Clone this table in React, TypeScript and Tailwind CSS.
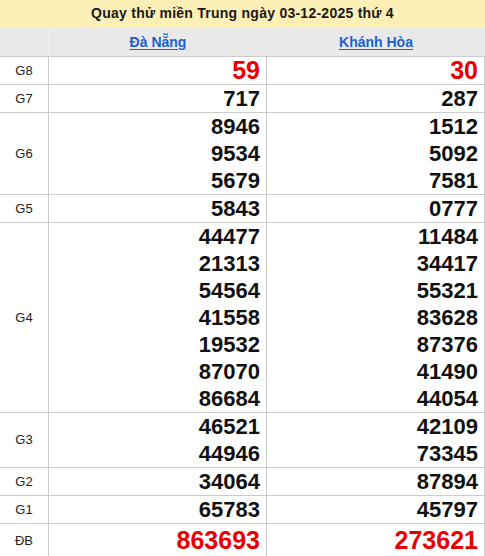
const provinces = ["Đà Nẵng", "Khánh Hòa"];

type Prize = { label: string; a: string[]; b: string[]; red?: boolean };

const prizes: Prize[] = [
  { label: "G8", a: ["59"], b: ["30"], red: true },
  { label: "G7", a: ["717"], b: ["287"] },
  { label: "G6", a: ["8946", "9534", "5679"], b: ["1512", "5092", "7581"] },
  { label: "G5", a: ["5843"], b: ["0777"] },
  {
    label: "G4",
    a: ["44477", "21313", "54564", "41558", "19532", "87070", "86684"],
    b: ["11484", "34417", "55321", "83628", "87376", "41490", "44054"],
  },
  { label: "G3", a: ["46521", "44946"], b: ["42109", "73345"] },
  { label: "G2", a: ["34064"], b: ["87894"] },
  { label: "G1", a: ["65783"], b: ["45797"] },
  { label: "ĐB", a: ["863693"], b: ["273621"], red: true },
];

function NumberCell({ nums, red, last }: { nums: string[]; red?: boolean; last?: boolean }) {
  return (
    <div className="flex flex-col items-end border-r border-[#cccccc] pr-[6px]">
      {nums.map((n) => (
        <span
          key={n}
          className={
            red
              ? `text-[25px] font-bold text-[#e60000] ${last ? "leading-[33px]" : "leading-[27px]"}`
              : "text-[22px] font-bold leading-[27px] text-[#111111]"
          }
        >
          {n}
        </span>
      ))}
    </div>
  );
}

export default function App() {
  return (
    <div className="w-[485px] bg-white font-['Liberation_Sans',Arial,sans-serif]">
      <div className="flex h-7 items-center justify-center bg-[#fcefb5] pb-[2px] text-[14px] font-bold tracking-[0.25px] text-[#1a1a1a]">
        Quay thử miền Trung ngày 03-12-2025 thứ 4
      </div>

      <div className="grid h-[29px] grid-cols-[49px_218px_218px] border-b border-[#cccccc] bg-[#e9e9e9]">
        <div className="border-r border-[#f3f3f3]" />
        {provinces.map((p) => (
          <div key={p} className="flex items-center justify-center">
            <a href="#" className="text-[14px] font-bold text-[#1c5fd4] underline underline-offset-2">
              {p}
            </a>
          </div>
        ))}
      </div>

      {prizes.map((p, i) => (
        <div
          key={p.label}
          className="grid grid-cols-[49px_218px_218px] border-b border-[#cccccc]"
        >
          <div className="flex items-center justify-center border-r border-[#cccccc] text-[13px] text-[#222222]">
            {p.label}
          </div>
          <NumberCell nums={p.a} red={p.red} last={i === prizes.length - 1} />
          <NumberCell nums={p.b} red={p.red} last={i === prizes.length - 1} />
        </div>
      ))}
    </div>
  );
}
